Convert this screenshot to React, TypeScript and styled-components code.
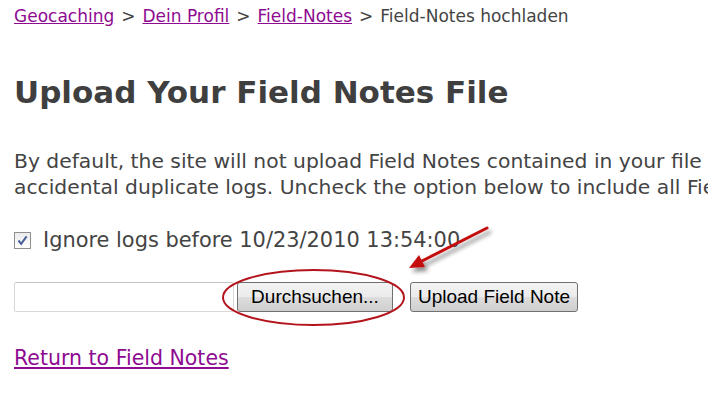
import React from 'react';
import styled, { createGlobalStyle } from 'styled-components';

const GlobalStyle = createGlobalStyle`
  html, body {
    margin: 0;
    padding: 0;
    background: #ffffff;
    overflow: hidden;
  }
  body {
    font-family: 'DejaVu Sans', Verdana, sans-serif;
    color: #444444;
  }
`;

const Page = styled.main`
  position: relative;
  width: 1000px;
  height: 400px;
  padding: 6px 14px 0;
  box-sizing: border-box;
`;

const Crumbs = styled.nav`
  display: flex;
  align-items: center;
  gap: 7px;
  font-size: 17px;
  line-height: 20px;
  color: #444444;
`;

const Link = styled.a`
  color: #8e0a91;
  text-decoration: underline;
`;

const Title = styled.h1`
  margin: 48px 0 0;
  font-size: 31px;
  line-height: 36px;
  font-weight: bold;
  color: #3f3f3f;
`;

const Intro = styled.p`
  margin: 38px 0 0;
  font-size: 20.3px;
  line-height: 26px;
  white-space: nowrap;
`;

const CheckRow = styled.label`
  display: flex;
  align-items: center;
  gap: 12px;
  margin-top: 28px;
  height: 24px;
  font-size: 20.9px;
`;

const CheckBox = styled.span`
  width: 17px;
  height: 17px;
  box-sizing: border-box;
  border: 1px solid #8f8f8f;
  background: linear-gradient(#ececec, #ffffff);
  display: flex;
  align-items: center;
  justify-content: center;
`;

const UploadRow = styled.div`
  display: flex;
  align-items: center;
  margin-top: 30px;
  height: 30px;
`;

const FileField = styled.input`
  width: 220px;
  height: 30px;
  box-sizing: border-box;
  border: 1px solid #d8d8d8;
  border-top-color: #c4c4c4;
  border-radius: 2px;
  background: #fff;
  margin: 0 3px 0 0;
`;

const Button = styled.button<{ $w: number; $gap?: number }>`
  width: ${({ $w }) => $w}px;
  height: 30px;
  margin: 0 ${({ $gap }) => $gap ?? 0}px 0 0;
  padding: 0;
  box-sizing: border-box;
  border: 1px solid #707070;
  border-radius: 3px;
  background: linear-gradient(#f3f3f3 0%, #ebebeb 50%, #dddddd 51%, #cfcfcf 100%);
  font-family: 'Liberation Sans', Arial, sans-serif;
  font-size: 19px;
  color: #000;
`;

const ReturnLink = styled(Link)`
  display: inline-block;
  margin-top: 34px;
  font-size: 20.5px;
  line-height: 24px;
`;

const Overlay = styled.svg`
  position: absolute;
  left: 0;
  top: 0;
  pointer-events: none;
`;

export default function App() {
  return (
    <>
      <GlobalStyle />
      <Page>
        <Crumbs>
          <Link href="#">Geocaching</Link>
          <span>&gt;</span>
          <Link href="#">Dein Profil</Link>
          <span>&gt;</span>
          <Link href="#">Field-Notes</Link>
          <span>&gt;</span>
          <span>Field-Notes hochladen</span>
        </Crumbs>
        <Title>Upload Your Field Notes File</Title>
        <Intro>
          By default, the site will not upload Field Notes contained in your file
          <br />
          accidental duplicate logs. Uncheck the option below to include all Field Notes.
        </Intro>
        <CheckRow>
          <CheckBox>
            <svg width="11" height="11" viewBox="0 0 11 11">
              <path d="M1.5 5.5 L4.2 8.8 L9.6 1.4" fill="none" stroke="#45609a" strokeWidth="2" />
            </svg>
          </CheckBox>
          Ignore logs before 10/23/2010 13:54:00
        </CheckRow>
        <UploadRow>
          <FileField type="text" readOnly />
          <Button $w={156} $gap={17}>Durchsuchen...</Button>
          <Button $w={168}>Upload Field Note</Button>
        </UploadRow>
        <ReturnLink href="#">Return to Field Notes</ReturnLink>
        <Overlay width="708" height="400" viewBox="0 0 708 400">
          <defs>
            <filter id="sh" x="-20%" y="-20%" width="140%" height="140%">
              <feGaussianBlur in="SourceAlpha" stdDeviation="2" />
              <feOffset dx="3" dy="4" result="b" />
              <feComponentTransfer>
                <feFuncA type="linear" slope="0.45" />
              </feComponentTransfer>
              <feMerge>
                <feMergeNode />
                <feMergeNode in="SourceGraphic" />
              </feMerge>
            </filter>
          </defs>
          <g filter="url(#sh)">
            <line x1="487" y1="228" x2="420" y2="262" stroke="#c40c0c" strokeWidth="3" strokeLinecap="round" />
            <polygon points="409,268 419,255 425,267" fill="#c40c0c" />
          </g>
          <ellipse cx="313.5" cy="297.5" rx="90.5" ry="27.5" fill="none" stroke="#b3141c" strokeWidth="2" />
        </Overlay>
      </Page>
    </>
  );
}
